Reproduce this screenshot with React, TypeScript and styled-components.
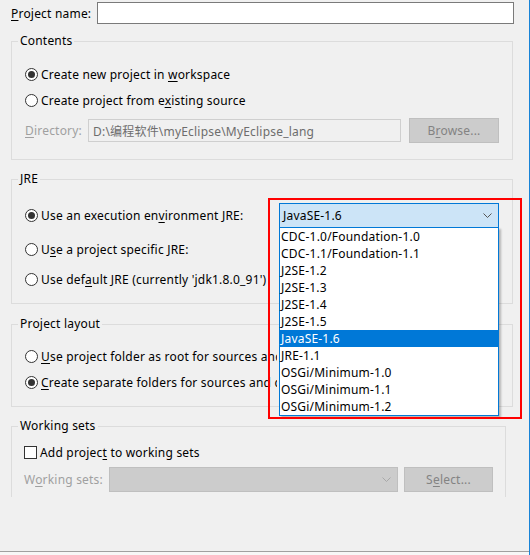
import React from "react";
import styled, { createGlobalStyle } from "styled-components";

const GlobalStyle = createGlobalStyle`
  html, body {
    margin: 0;
    padding: 0;
    background: #f0f0f0;
  }
  body {
    font-family: "Noto Sans", "Noto Sans CJK SC", sans-serif;
    font-size: 12px;
    letter-spacing: 0.2px;
    color: #000;
  }
`;

const environments = [
  "CDC-1.0/Foundation-1.0",
  "CDC-1.1/Foundation-1.1",
  "J2SE-1.2",
  "J2SE-1.3",
  "J2SE-1.4",
  "J2SE-1.5",
  "JavaSE-1.6",
  "JRE-1.1",
  "OSGi/Minimum-1.0",
  "OSGi/Minimum-1.1",
  "OSGi/Minimum-1.2",
];

const Page = styled.div`
  position: relative;
  width: 530px;
  height: 555px;
  box-sizing: border-box;
  border-right: 1px solid #1883d7;
  display: flex;
  flex-direction: column;
`;

const Main = styled.div`
  flex: 1;
  padding: 2px 15px 0 11px;
  overflow: hidden;
`;

const Footer = styled.div`
  height: 3px;
  border-top: 1px solid #a0a0a0;
  background: #f7f7f7;
`;

const NameRow = styled.div`
  display: flex;
  align-items: center;
  gap: 6px;
  height: 22px;
`;

const Mn = styled.u`
  text-decoration: underline;
  text-underline-offset: 2px;
`;

const TextInput = styled.div`
  flex: 1;
  height: 22px;
  box-sizing: border-box;
  border: 1px solid #7a7a7a;
  background: #fff;
`;

const Group = styled.fieldset<{ $gap: number; $width: number; $open?: boolean }>`
  margin: ${(p) => p.$gap}px 0 0;
  padding: 0;
  width: ${(p) => p.$width}px;
  min-width: 0;
  box-sizing: border-box;
  border: 1px solid #dcdcdc;
  ${(p) => (p.$open ? "border-bottom: none;" : "")}
`;

const Legend = styled.legend`
  margin-left: 6px;
  padding: 0 2px;
  line-height: 16px;
  font-size: 12px;
`;

const GroupBody = styled.div<{ $top: number; $bottom: number; $side: number }>`
  display: flex;
  flex-direction: column;
  padding: ${(p) => p.$top}px ${(p) => p.$side}px ${(p) => p.$bottom}px;
`;

const Row = styled.div<{ $h?: number; $mt?: number }>`
  display: flex;
  align-items: center;
  height: ${(p) => p.$h ?? 20}px;
  margin-top: ${(p) => p.$mt ?? 0}px;
  white-space: nowrap;
`;

const Choice = styled.label`
  display: flex;
  align-items: center;
  gap: 3px;
  white-space: nowrap;
`;

/* text of a row whose end lies under the open drop-down list */
const Covered = styled.span`
  width: 236px;
  overflow: hidden;
`;

const RadioDot = styled.span<{ $on?: boolean }>`
  position: relative;
  width: 13px;
  height: 13px;
  box-sizing: border-box;
  border: 1px solid #333;
  border-radius: 50%;
  background: #fff;
  flex: none;
  &::after {
    content: "";
    display: ${(p) => (p.$on ? "block" : "none")};
    position: absolute;
    left: 2px;
    top: 2px;
    width: 7px;
    height: 7px;
    border-radius: 50%;
    background: #333;
  }
`;

const CheckBox = styled.span`
  width: 13px;
  height: 13px;
  box-sizing: border-box;
  border: 1px solid #333;
  background: #fff;
  flex: none;
`;

const DimLabel = styled.span`
  color: #a0a0a0;
  margin-right: 6px;
`;

const DimInput = styled.div`
  flex: 1;
  height: 23px;
  box-sizing: border-box;
  border: 1px solid #cfcfcf;
  background: #f0f0f0;
  color: #6d6d6d;
  padding-left: 4px;
  display: flex;
  align-items: center;
  overflow: hidden;
`;

const DimButton = styled.div<{ $w: number }>`
  width: ${(p) => p.$w}px;
  height: 25px;
  margin-left: ${(p) => (p.$w > 89 ? 8 : 6)}px;
  box-sizing: border-box;
  border: 1px solid #bfbfbf;
  background: #cccccc;
  color: #838383;
  display: flex;
  align-items: center;
  justify-content: center;
  flex: none;
`;

const Combo = styled.div<{ $disabled?: boolean }>`
  position: relative;
  height: 25px;
  box-sizing: border-box;
  border: 1px solid ${(p) => (p.$disabled ? "#bfbfbf" : "#0078d7")};
  background: ${(p) => (p.$disabled ? "#cccccc" : "#cce4f7")};
  display: flex;
  align-items: center;
  justify-content: space-between;
  padding: 0 6px 0 3px;
  color: ${(p) => (p.$disabled ? "#838383" : "#000")};
`;

const JreCombo = styled(Combo)`
  width: 220px;
  margin-left: auto;
`;

const SetsCombo = styled(Combo)`
  flex: 1;
`;

const List = styled.ul`
  position: absolute;
  top: 100%;
  left: -1px;
  width: 220px;
  margin: 0;
  padding: 0;
  list-style: none;
  box-sizing: border-box;
  border: 1px solid #0078d7;
  background: #fff;
  box-shadow: 2px 2px 2px rgba(0, 0, 0, 0.25);
  z-index: 2;
`;

const Item = styled.li<{ $sel?: boolean }>`
  height: 17px;
  line-height: 17px;
  padding-left: 1px;
  background: ${(p) => (p.$sel ? "#0078d7" : "transparent")};
  color: ${(p) => (p.$sel ? "#fff" : "#000")};
`;

const Highlight = styled.div`
  position: absolute;
  left: 268px;
  top: 198px;
  width: 254px;
  height: 221px;
  box-sizing: border-box;
  border: 2px solid #ff0000;
  pointer-events: none;
  z-index: 3;
`;

const Chevron = ({ color }: { color: string }) => (
  <svg width="9" height="5" viewBox="0 0 9 5">
    <polyline points="0.5,0.5 4.5,4.5 8.5,0.5" fill="none" stroke={color} strokeWidth="1" />
  </svg>
);

const App = () => {
  return (
    <>
      <GlobalStyle />
      <Page>
        <Main>
          <NameRow>
            <span>
              <Mn>P</Mn>roject name:
            </span>
            <TextInput />
          </NameRow>

          <Group $gap={9} $width={502}>
            <Legend>Contents</Legend>
            <GroupBody $top={15} $bottom={16} $side={13}>
              <Row>
                <Choice>
                  <RadioDot $on />
                  <span>
                    Create new project in <Mn>w</Mn>orkspace
                  </span>
                </Choice>
              </Row>
              <Row $mt={6}>
                <Choice>
                  <RadioDot />
                  <span>
                    Create project from e<Mn>x</Mn>isting source
                  </span>
                </Choice>
              </Row>
              <Row $h={25} $mt={8}>
                <DimLabel>
                  <Mn>D</Mn>irectory:
                </DimLabel>
                <DimInput>D:\编程软件\myEclipse\MyEclipse_lang</DimInput>
                <DimButton $w={90}>
                  <span>
                    B<Mn>r</Mn>owse...
                  </span>
                </DimButton>
              </Row>
            </GroupBody>
          </Group>

          <Group $gap={11} $width={502}>
            <Legend>JRE</Legend>
            <GroupBody $top={16} $bottom={14} $side={13}>
              <Row $h={25}>
                <Choice>
                  <RadioDot $on />
                  <span>
                    Use an execution en<Mn>v</Mn>ironment JRE:
                  </span>
                </Choice>
                <JreCombo>
                  <span>JavaSE-1.6</span>
                  <Chevron color="#555" />
                  <List>
                    {environments.map((env) => (
                      <Item key={env} $sel={env === "JavaSE-1.6"}>
                        {env}
                      </Item>
                    ))}
                  </List>
                </JreCombo>
              </Row>
              <Row $h={25} $mt={9}>
                <Choice>
                  <RadioDot />
                  <span>
                    U<Mn>s</Mn>e a project specific JRE:
                  </span>
                </Choice>
              </Row>
              <Row $mt={7}>
                <Choice>
                  <RadioDot />
                  <span>
                    Use def<Mn>a</Mn>ult JRE (currently 'jdk1.8.0_91')
                  </span>
                </Choice>
              </Row>
            </GroupBody>
          </Group>

          <Group $gap={12} $width={502}>
            <Legend>Project layout</Legend>
            <GroupBody $top={14} $bottom={14} $side={13}>
              <Row>
                <Choice>
                  <RadioDot />
                  <Covered>
                    <Mn>U</Mn>se project folder as root for sources and class files
                  </Covered>
                </Choice>
              </Row>
              <Row $mt={6}>
                <Choice>
                  <RadioDot $on />
                  <Covered>
                    <Mn>C</Mn>reate separate folders for sources and class files
                  </Covered>
                </Choice>
              </Row>
            </GroupBody>
          </Group>

          <Group $gap={11} $width={495} $open>
            <Legend>Working sets</Legend>
            <GroupBody $top={8} $bottom={5} $side={12}>
              <Row>
                <Choice>
                  <CheckBox />
                  <span>
                    Add projec<Mn>t</Mn> to working sets
                  </span>
                </Choice>
              </Row>
              <Row $h={25} $mt={5}>
                <DimLabel>
                  W<Mn>o</Mn>rking sets:
                </DimLabel>
                <SetsCombo $disabled>
                  <span />
                  <Chevron color="#a8a8a8" />
                </SetsCombo>
                <DimButton $w={89}>
                  <span>
                    S<Mn>e</Mn>lect...
                  </span>
                </DimButton>
              </Row>
            </GroupBody>
          </Group>
        </Main>
        <Footer />
        <Highlight />
      </Page>
    </>
  );
};

export default App;
